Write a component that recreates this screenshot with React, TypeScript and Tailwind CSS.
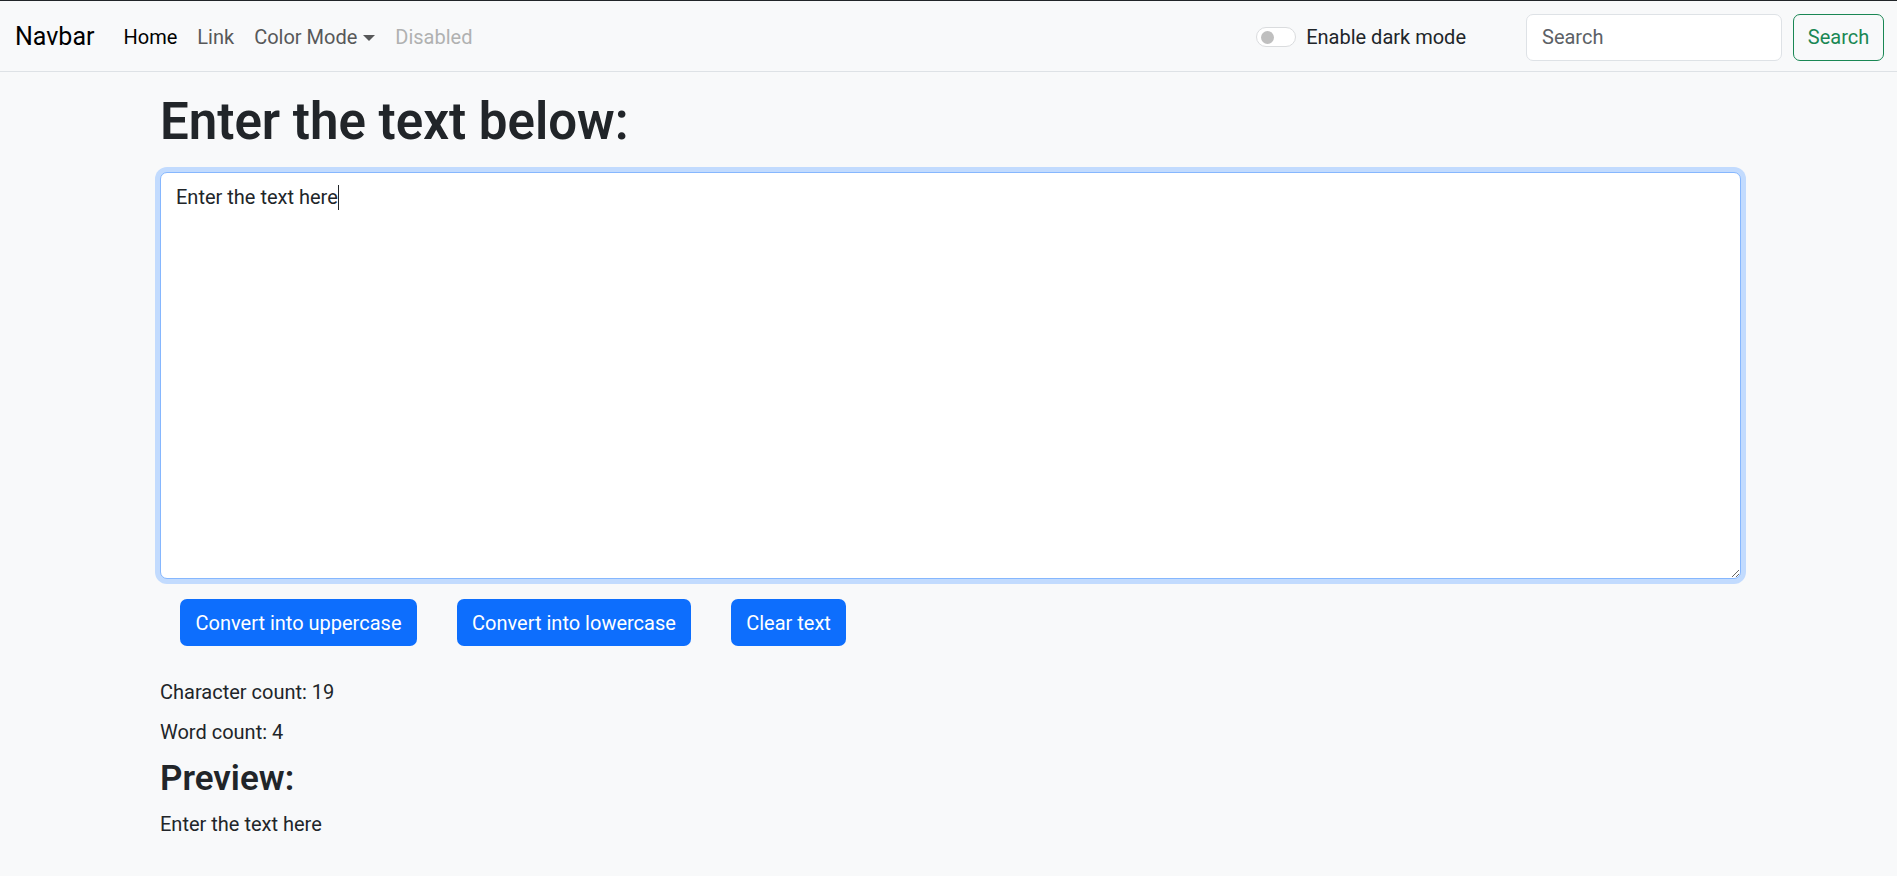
import { useState } from 'react';

const navLinks = [
  { label: 'Home', className: 'text-black' },
  { label: 'Link', className: 'text-[#575859]' },
];

const actions = [
  { label: 'Convert into uppercase', width: 'w-[237px]' },
  { label: 'Convert into lowercase', width: 'w-[234px]' },
  { label: 'Clear text', width: 'w-[115px]' },
];

export default function App() {
  const [text, setText] = useState('Enter the text here');
  const words = text.split(/\s+/).filter(Boolean).length;

  return (
    <div className="min-h-[876px] bg-[#f8f9fa] font-['Roboto',sans-serif] text-[#212529]">
      {/* Navbar */}
      <nav className="flex h-[72px] items-center border-t border-b border-t-[#212529] border-b-[#dee2e6] pl-[15px] pr-[13px] pt-[2px]">
        <span className="text-[25px] text-black">Navbar</span>
        <ul className="ml-[19px] flex items-center text-[20px]">
          {navLinks.map(({ label, className }) => (
            <li key={label} className={`px-[10px] ${className}`}>
              {label}
            </li>
          ))}
          <li className="flex items-center px-[10px] text-[#575859]">
            Color Mode
            <span className="ml-[6px] mt-[1px] h-0 w-0 border-x-[6px] border-t-[6px] border-x-transparent border-t-[#575859]" />
          </li>
          <li className="px-[10px] text-[#b0b1b1]">Disabled</li>
        </ul>

        <div className="ml-auto flex items-center">
          <label className="flex items-center text-[20px]">
            <span className="flex h-[20px] w-[40px] items-center rounded-full border border-[#dadcde] bg-white pl-[4px]">
              <span className="size-[13px] rounded-full bg-[#bfbfbf]" />
            </span>
            <span className="ml-[10px]">Enable dark mode</span>
          </label>
          <form className="ml-[60px] flex items-center gap-[11px]">
            <input
              placeholder="Search"
              className="h-[47px] w-[256px] rounded-[7px] border border-[#dee2e6] bg-white px-[15px] text-[20px] outline-none placeholder:text-[#5c6166]"
            />
            <button
              type="button"
              className="h-[47px] w-[91px] rounded-[7px] border border-[#198754] text-[20px] text-[#198754]"
            >
              Search
            </button>
          </form>
        </div>
      </nav>

      {/* Text area section */}
      <main className="ml-[160px] w-[1581px]">
        <h1 className="mt-[20px] text-[51px] leading-[60px] font-semibold">Enter the text below:</h1>
        <div className="relative mt-[20px]">
          <textarea
            value={text}
            onChange={(e) => setText(e.target.value)}
            className="block h-[407px] w-full rounded-[7px] border border-[#86b7fe] bg-white px-[15px] py-[9px] text-[20px] leading-[1.5] text-[#212529] shadow-[0_0_0_5px_#c2dbfe] outline-none"
          />
          {/* fake caret, mirrors the textarea text */}
          <div className="pointer-events-none absolute inset-0 border border-transparent px-[15px] py-[9px] text-[20px] leading-[1.5] text-transparent">
            {text}
            <span className="relative -top-[1px] inline-block h-[25px] w-px bg-[#212529] align-middle" />
          </div>
        </div>

        <div className="mt-[20px] ml-[20px] flex gap-[40px]">
          {actions.map(({ label, width }) => (
            <button
              key={label}
              className={`h-[47px] ${width} whitespace-nowrap rounded-[7px] bg-[#0d6efd] text-[20px] text-white`}
            >
              {label}
            </button>
          ))}
        </div>

        <div className="mt-[31px] text-[20px] leading-[1.5]">
          <p>Character count: {text.length}</p>
          <p className="mt-[10px]">Word count: {words}</p>
          <h2 className="mt-[11px] text-[35px] leading-[1.2] font-semibold">Preview:</h2>
          <p className="mt-[9px]">{text}</p>
        </div>
      </main>
    </div>
  );
}
